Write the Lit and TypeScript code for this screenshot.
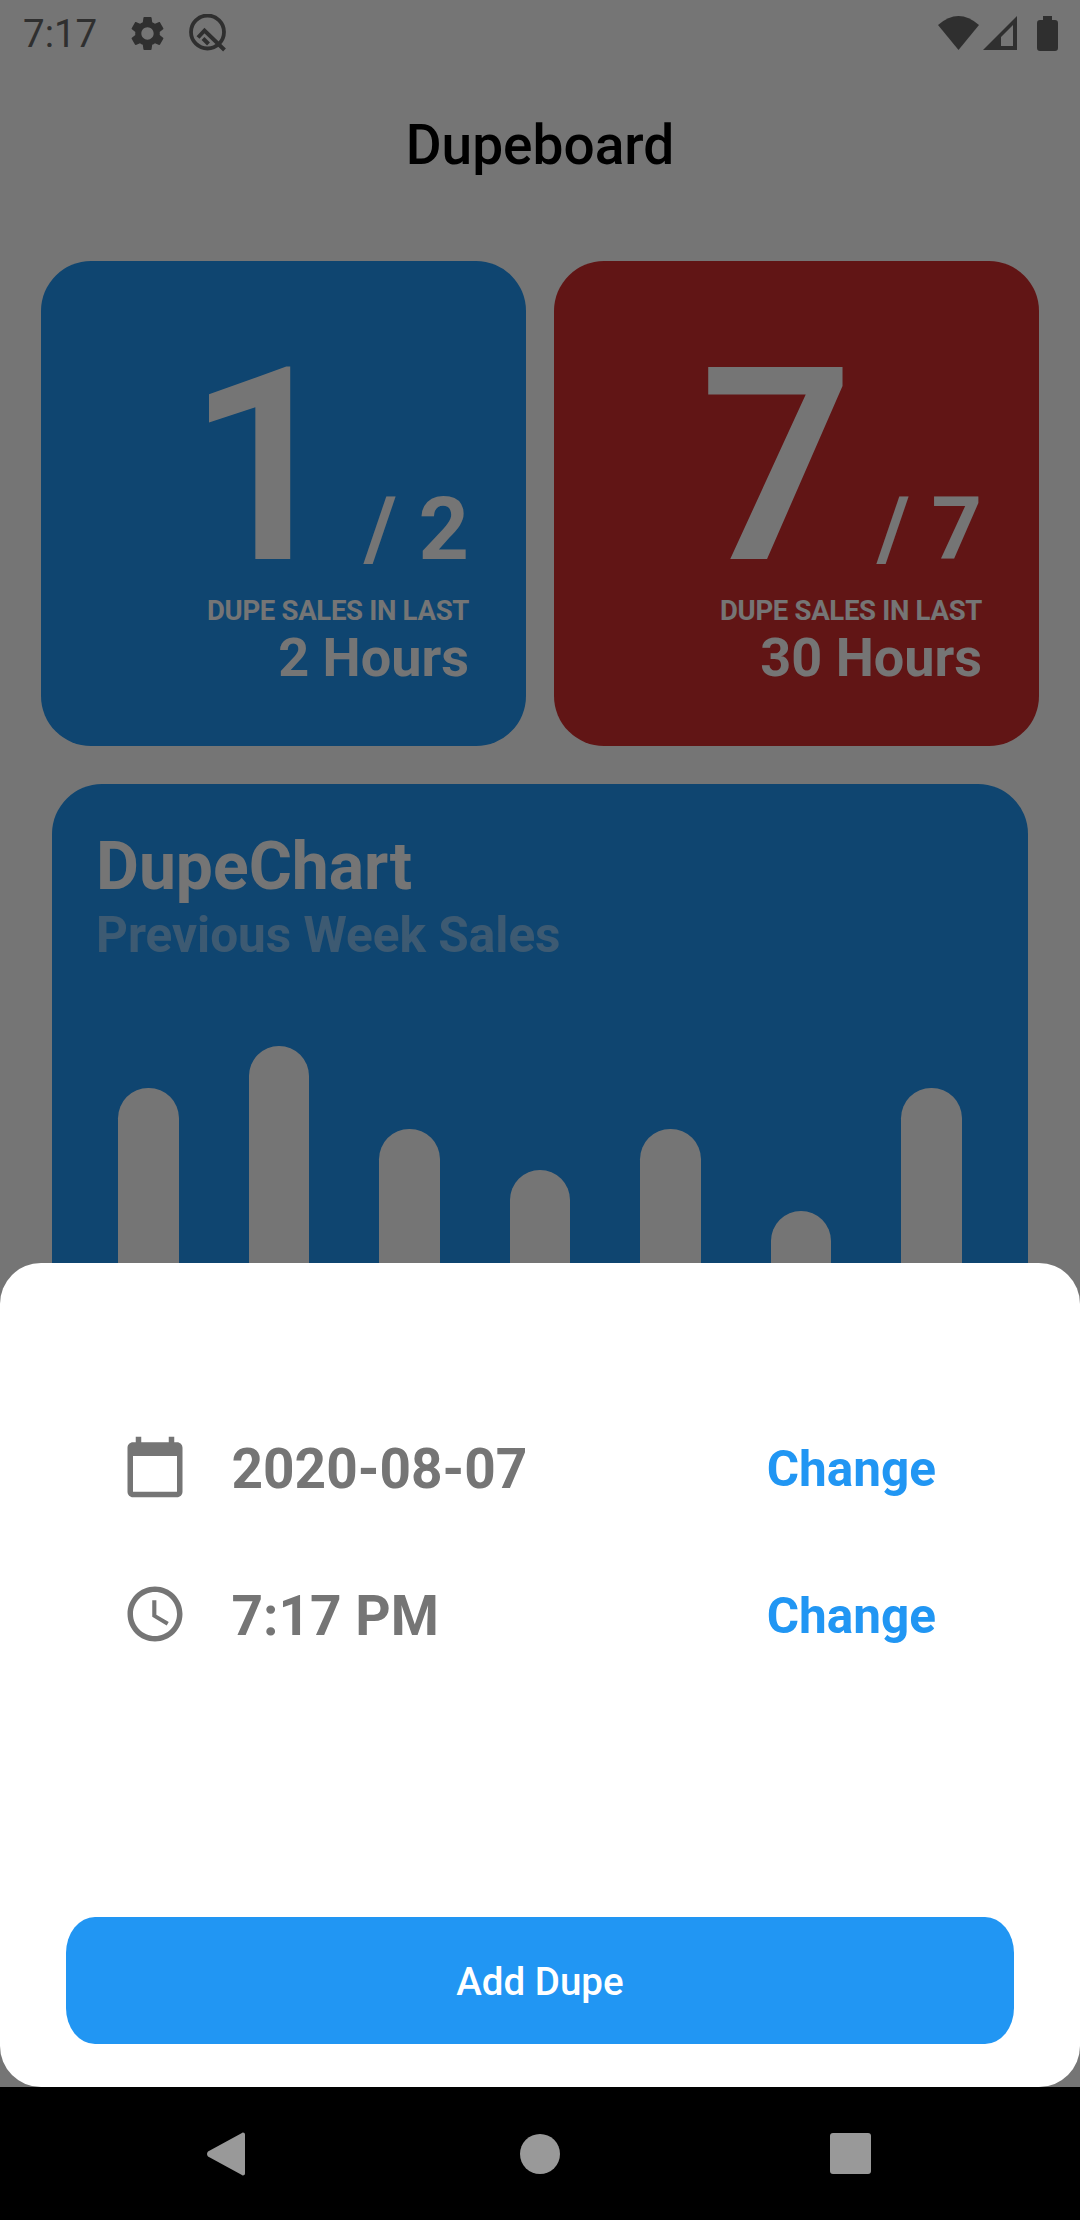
import { LitElement, html, css, svg } from 'lit';
import { customElement } from 'lit/decorators.js';

const BARS = [6, 7, 5, 4, 5, 3, 6];
const UNIT = 41.25;

const stats = [
  { value: '1', total: '/ 2', hours: '2 Hours', tone: 'blue' },
  { value: '7', total: '/ 7', hours: '30 Hours', tone: 'red' },
];

const gear = svg`<path d="M19.14 12.94c.04-.3.06-.61.06-.94 0-.32-.02-.64-.07-.94l2.03-1.58c.18-.14.23-.41.12-.61l-1.92-3.32c-.12-.22-.37-.29-.59-.22l-2.39.96c-.5-.38-1.03-.7-1.62-.94l-.36-2.54c-.04-.24-.24-.41-.48-.41h-3.84c-.24 0-.43.17-.47.41l-.36 2.54c-.59.24-1.13.57-1.62.94l-2.39-.96c-.22-.08-.47 0-.59.22L2.74 8.87c-.12.21-.08.47.12.61l2.03 1.58c-.05.3-.09.63-.09.94s.02.64.07.94l-2.03 1.58c-.18.14-.23.41-.12.61l1.92 3.32c.12.22.37.29.59.22l2.39-.96c.5.38 1.03.7 1.62.94l.36 2.54c.05.24.24.41.48.41h3.84c.24 0 .44-.17.47-.41l.36-2.54c.59-.24 1.13-.56 1.62-.94l2.39.96c.22.08.47 0 .59-.22l1.92-3.32c.12-.22.07-.47-.12-.61l-2.01-1.58zM12 15.6c-1.98 0-3.6-1.62-3.6-3.6s1.62-3.6 3.6-3.6 3.6 1.62 3.6 3.6-1.62 3.6-3.6 3.6z"/>`;
const calendar = svg`<path d="M20 3h-1V1h-2v2H7V1H5v2H4c-1.1 0-2 .9-2 2v16c0 1.1.9 2 2 2h16c1.1 0 2-.9 2-2V5c0-1.1-.9-2-2-2zm0 18H4V8h16v13z"/>`;
const clock = svg`<path d="M11.99 2C6.47 2 2 6.48 2 12s4.47 10 9.99 10C17.52 22 22 17.52 22 12S17.52 2 11.99 2zM12 20c-4.42 0-8-3.58-8-8s3.58-8 8-8 8 3.58 8 8-3.58 8-8 8zm.5-13H11v6l5.25 3.15.75-1.23-4.5-2.67z"/>`;

@customElement('app-root')
export class AppRoot extends LitElement {
  static styles = css`
    :host {
      display: block;
      width: 1080px;
      height: 2220px;
      font-family: Roboto, sans-serif;
    }
    .screen {
      position: relative;
      height: 2220px;
      display: flex;
      flex-direction: column;
      background: #fff;
      overflow: hidden;
    }
    .page {
      flex: 1;
      min-height: 0;
      overflow: hidden;
    }
    .status {
      height: 66px;
      display: flex;
      align-items: center;
      padding: 0 22px 0 23px;
      color: #686868;
      font-size: 38.5px;
    }
    .status svg {
      display: block;
      fill: currentColor;
    }
    .status .time {
      margin-right: 30px;
    }
    .status .q {
      margin-left: 21px;
    }
    .status .spacer {
      flex: 1;
    }
    .status .signal {
      margin-left: 4px;
    }
    .status .battery {
      margin-left: 20px;
    }
    .title {
      margin: 0;
      padding: 47px 0 84px;
      text-align: center;
      font-size: 55px;
      line-height: 64px;
      font-weight: 500;
      color: #000;
    }
    .stats {
      display: grid;
      grid-template-columns: 485px 485px;
      gap: 28px;
      padding: 0 41px;
    }
    .stat {
      height: 485px;
      box-sizing: border-box;
      padding: 86px 57px 0 0;
      border-radius: 50px;
      color: #fff;
      font-weight: 700;
      display: flex;
      flex-direction: column;
      align-items: flex-end;
    }
    .stat.blue {
      background: #2196f3;
    }
    .stat.red {
      background: #d32f2f;
    }
    .count {
      height: 240px;
      display: flex;
      align-items: baseline;
    }
    .count b {
      font-size: 270px;
      line-height: 240px;
      font-weight: 600;
    }
    .count span {
      margin-left: 23px;
      font-size: 88px;
      line-height: 88px;
    }
    .label {
      margin-top: 8px;
      font-size: 27.5px;
      line-height: 31px;
      letter-spacing: -0.3px;
    }
    .hours {
      font-size: 54px;
      line-height: 64px;
    }
    .chart {
      margin: 38px 52px 0;
      height: 620px;
      box-sizing: border-box;
      padding: 44px 44px 0;
      border-radius: 50px;
      background: #2196f3;
      color: #fff;
      font-weight: 700;
    }
    .chart h2 {
      margin: 0;
      font-size: 66px;
      line-height: 78px;
      font-weight: 700;
    }
    .chart p {
      margin: 0;
      font-size: 49.5px;
      line-height: 58px;
      color: rgba(255, 255, 255, 0.45);
    }
    .bars {
      margin: 82px 22px 0;
      height: 289px;
      display: flex;
      align-items: flex-end;
      justify-content: space-between;
    }
    .bars div {
      width: 60.5px;
      border-radius: 30.25px 30.25px 0 0;
      background: #fff;
    }
    .scrim {
      position: absolute;
      left: 0;
      right: 0;
      top: 0;
      bottom: 133px;
      background: rgba(0, 0, 0, 0.54);
    }
    .sheet {
      position: absolute;
      left: 0;
      right: 0;
      bottom: 133px;
      height: 824px;
      box-sizing: border-box;
      padding: 171px 66px 43px;
      border-radius: 41px;
      background: #fff;
      display: flex;
      flex-direction: column;
    }
    .rows {
      display: flex;
      flex-direction: column;
      gap: 81px;
      padding: 0 78px 0 55.5px;
    }
    .row {
      height: 66px;
      display: flex;
      align-items: center;
      gap: 44px;
      color: #757575;
      font-size: 55px;
      font-weight: 700;
    }
    .row svg {
      width: 66px;
      height: 66px;
      fill: currentColor;
      flex: none;
    }
    .row .value {
      flex: 1;
      padding-top: 4px;
    }
    .row .change {
      padding-top: 4px;
      color: #2196f3;
      font-size: 49.5px;
    }
    .add {
      margin-top: auto;
      height: 127px;
      border: 0;
      padding: 2px 0 0;
      border-radius: 29px / 36px;
      background: #2196f3;
      color: #fff;
      font: 500 38.5px Roboto, sans-serif;
    }
    .nav {
      height: 133px;
      flex: none;
      box-sizing: border-box;
      padding-left: 207px;
      background: #000;
      position: relative;
      z-index: 1;
      display: flex;
      align-items: center;
    }
    .nav svg {
      display: block;
      fill: #999;
    }
    .nav .back {
      margin-right: 275px;
    }
    .nav .home {
      margin-right: 270px;
    }
  `;

  render() {
    return html`
      <div class="screen">
        <div class="page">
          <div class="status">
            <span class="time">7:17</span>
            <svg width="41" height="41" viewBox="0 0 24 24">${gear}</svg>
            <svg class="q" width="38" height="38" viewBox="0 0 38 38">
              <circle cx="18.5" cy="18" r="16.5" fill="none" stroke="currentColor" stroke-width="3.8"></circle>
              <path d="M9 23.5L15.5 16.5L35.5 36" fill="none" stroke="currentColor" stroke-width="4"></path>
              <path d="M14 24.5L19.5 30" fill="none" stroke="currentColor" stroke-width="4"></path>
            </svg>
            <span class="spacer"></span>
            <svg width="41" height="34" viewBox="0 0 41 34"><path d="M0 9Q20.5 -9 41 9L20.5 34z"></path></svg>
            <svg class="signal" width="34" height="34" viewBox="0 0 34 34">
              <path fill-rule="evenodd" d="M0 34L34 0V34zM18 21V30H30V9z"></path>
            </svg>
            <svg class="battery" width="21" height="35" viewBox="0 0 21 35">
              <path d="M6 0h9v4h3a3 3 0 0 1 3 3v25a3 3 0 0 1-3 3H3a3 3 0 0 1-3-3V7a3 3 0 0 1 3-3h3z"></path>
            </svg>
          </div>
          <h1 class="title">Dupeboard</h1>
          <div class="stats">
            ${stats.map(
              (s) => html`
                <div class="stat ${s.tone}">
                  <div class="count"><b>${s.value}</b><span>${s.total}</span></div>
                  <div class="label">DUPE SALES IN LAST</div>
                  <div class="hours">${s.hours}</div>
                </div>
              `,
            )}
          </div>
          <div class="chart">
            <h2>DupeChart</h2>
            <p>Previous Week Sales</p>
            <div class="bars">
              ${BARS.map((v) => html`<div style="height:${v * UNIT}px"></div>`)}
            </div>
          </div>
        </div>
        <div class="scrim"></div>
        <div class="sheet">
          <div class="rows">
            <div class="row">
              <svg viewBox="0 0 24 24">${calendar}</svg>
              <span class="value">2020-08-07</span>
              <span class="change">Change</span>
            </div>
            <div class="row">
              <svg viewBox="0 0 24 24">${clock}</svg>
              <span class="value">7:17 PM</span>
              <span class="change">Change</span>
            </div>
          </div>
          <button class="add">Add Dupe</button>
        </div>
        <div class="nav">
          <svg class="back" width="38" height="44" viewBox="0 0 38 44">
            <path d="M36 0.5a2 2 0 0 1 2 2v39a2 2 0 0 1-3.5 1.3L1 24.5a4 4 0 0 1 0-5L34.5 1.2A2 2 0 0 1 36 .5z"></path>
          </svg>
          <svg class="home" width="40" height="40" viewBox="0 0 40 40"><circle cx="20" cy="20" r="20"></circle></svg>
          <svg width="41" height="41" viewBox="0 0 41 41"><rect width="41" height="41" rx="3"></rect></svg>
        </div>
      </div>
    `;
  }
}
